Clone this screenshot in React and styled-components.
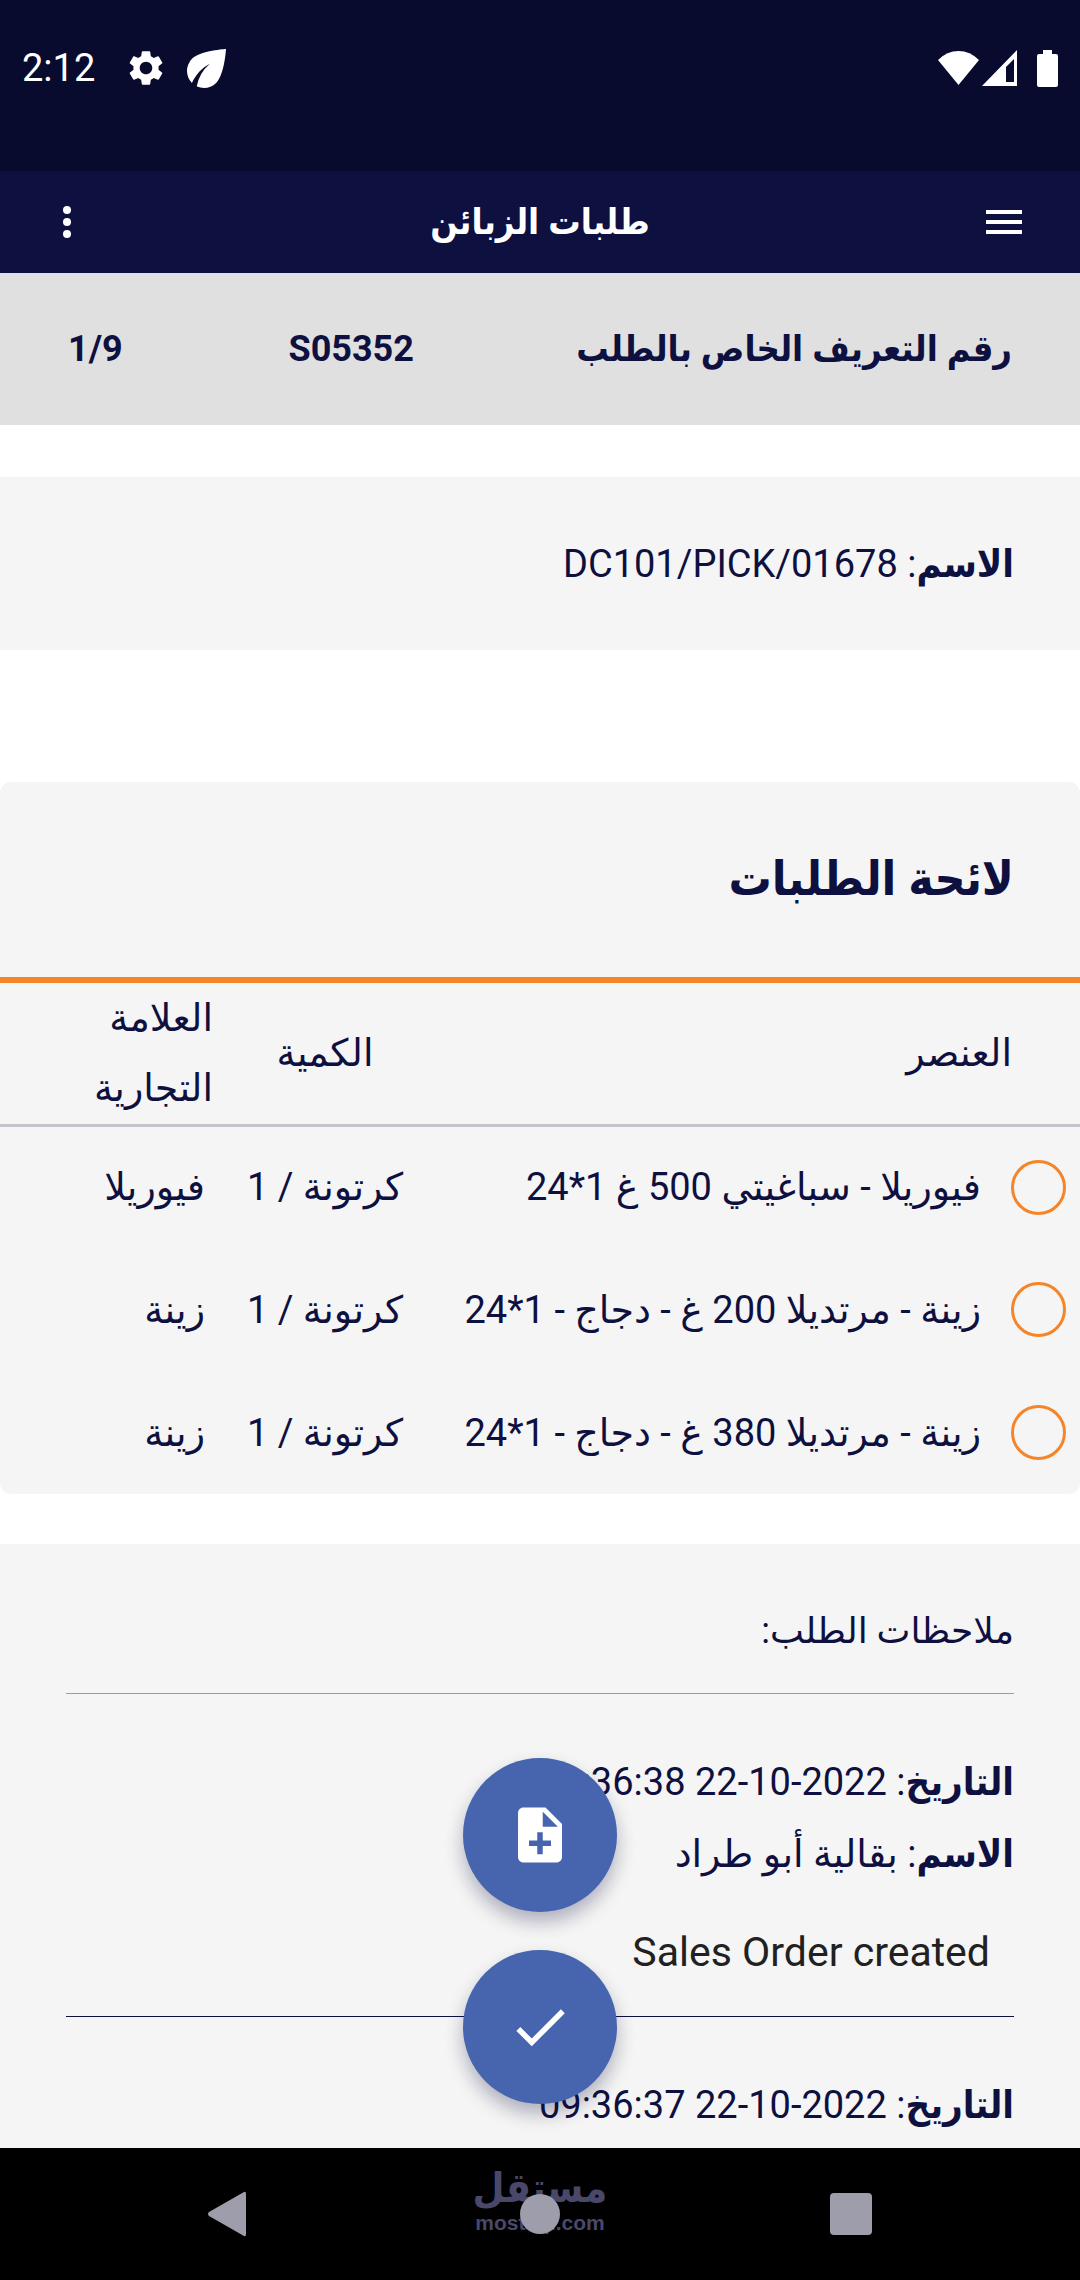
import React, { useState } from "react";
import styled, { createGlobalStyle } from "styled-components";
import { MdSettings, MdNoteAdd, MdCheck } from "react-icons/md";

const GlobalStyle = createGlobalStyle`
  * {
    box-sizing: border-box;
  }
  body {
    margin: 0;
    background: #fff;
    color: #0e1040;
    font-family: Roboto, "DejaVu Sans", sans-serif;
    font-size: 38px;
  }
  button {
    display: flex;
    align-items: center;
    justify-content: center;
    padding: 0;
    border: none;
    background: none;
    cursor: pointer;
  }
`;

const boldFont = `Roboto, "DejaVu Sans Condensed", "DejaVu Sans", sans-serif`;

const Screen = styled.div`
  display: flex;
  flex-direction: column;
  height: 100vh;
`;

const StatusBar = styled.div`
  display: flex;
  justify-content: space-between;
  height: 171px;
  padding: 44px 22px 0;
  background: #080b2e;
  color: #fff;
  direction: ltr;
`;

const StatusGroup = styled.div`
  display: flex;
  align-items: center;
  height: 48px;
  gap: ${(props) => props.$gap}px;
`;

const Time = styled.span`
  font-size: 38px;
  margin-right: 10px;
`;

const Header = styled.header`
  display: grid;
  grid-template-columns: 1fr auto 1fr;
  align-items: center;
  height: 102px;
  padding: 0 50px;
  background: #0e1040;
  color: #fff;
`;

const HeaderTitle = styled.h1`
  margin: 0;
  font-family: ${boldFont};
  font-size: 36px;
`;

const IconButton = styled.button`
  width: ${(props) => props.$width}px;
  height: 60px;
  color: #fff;
  justify-self: ${(props) => props.$side || "start"};
`;

const OrderBand = styled.section`
  display: grid;
  grid-template-columns: 23fr 10fr 7fr;
  align-items: center;
  height: 152px;
  padding: 0 68px;
  background: #e0e0e0;
  font-family: ${boldFont};
  font-size: 36px;
  font-weight: bold;
`;

const BandCell = styled.span`
  text-align: ${(props) => props.$align || "start"};
  white-space: nowrap;
`;

const Body = styled.div`
  position: relative;
  flex: 1;
  min-height: 0;
`;

const Scroll = styled.main`
  height: 100%;
  overflow-y: auto;
  scrollbar-width: none;
`;

const Card = styled.section`
  margin-top: ${(props) => props.$gap}px;
  border-radius: ${(props) => (props.$rounded ? 11 : 0)}px;
  background: #f5f5f5;
`;

const Line = styled.p`
  margin: 0;
  line-height: 72px;
`;

const Label = styled.b`
  font-family: ${boldFont};
`;

const NameCard = styled(Card)`
  padding: 51px 66px 50px;
`;

const ListTitle = styled.h2`
  margin: 0;
  padding: 61px 66px 62px;
  border-bottom: 6px solid #f68428;
  font-family: ${boldFont};
  font-size: 48px;
  line-height: 72px;
`;

const Table = styled.table`
  width: 100%;
  border-collapse: collapse;
  table-layout: fixed;
`;

const HeadRow = styled.tr`
  height: 142px;
  border-bottom: 3px solid #c2c3cb;
`;

const HeadCell = styled.th`
  padding: 0 ${(props) => props.$start || 0}px 0 ${(props) => props.$end || 0}px;
  font-weight: normal;
  line-height: 70px;
  text-align: ${(props) => props.$align || "start"};
`;

const Column = styled.col`
  width: ${(props) => props.$width || "auto"};
`;

const Row = styled.tr`
  height: 123px;
`;

const Cell = styled.td`
  padding: 0 ${(props) => props.$start || 0}px 0 0;
  text-align: ${(props) => props.$align || "start"};
  white-space: nowrap;
`;

const Check = styled.input`
  appearance: none;
  display: block;
  width: 55px;
  height: 55px;
  margin: 0;
  border: 3px solid #f68428;
  border-radius: 50%;
  cursor: pointer;
  &:checked {
    background: #f68428;
  }
`;

const Notes = styled(Card)`
  padding: 51px 66px 0;
`;

const NotesTitle = styled.h3`
  margin: 0;
  padding-bottom: 26px;
  border-bottom: 1px solid #f68428;
  font-size: 36px;
  font-weight: normal;
  line-height: 72px;
`;

const Note = styled.article`
  padding: 52px 0 28px;
  border-bottom: 1px solid #0e1040;
`;

const Message = styled.p`
  margin: 26px 24px 0;
  color: #212121;
  font-size: 41px;
  line-height: 72px;
`;

const Actions = styled.div`
  position: absolute;
  bottom: 44px;
  left: 0;
  right: 0;
  display: flex;
  flex-direction: column;
  align-items: center;
  gap: 38px;
  pointer-events: none;
`;

const Fab = styled.button`
  width: 154px;
  height: 154px;
  border-radius: 50%;
  && {
    background: #4765ae;
  }
  color: #fff;
  box-shadow: 0 10px 18px rgba(14, 16, 64, 0.3);
  pointer-events: auto;
`;

const NavBar = styled.nav`
  position: relative;
  display: grid;
  grid-template-columns: 17fr 6fr 17fr;
  align-items: center;
  justify-items: center;
  height: 132px;
  background: #000;
  direction: ltr;
`;

const NavButton = styled.button`
  position: relative;
  width: 80px;
  height: 80px;
`;

const Watermark = styled.a`
  position: absolute;
  top: 16px;
  left: 0;
  right: 0;
  display: flex;
  flex-direction: column;
  align-items: center;
  color: #49486a;
  font-weight: bold;
  text-decoration: none;
`;

const MarkName = styled.span`
  font-family: ${boldFont};
  font-size: 41px;
  line-height: 48px;
`;

const MarkSite = styled.span`
  font-family: "Liberation Sans", sans-serif;
  font-size: 21px;
  line-height: 22px;
`;

const items = [
  { id: 1, name: "فيوريلا - سباغيتي 500 غ 1*24", qty: "كرتونة / 1", brand: "فيوريلا" },
  { id: 2, name: "زينة - مرتديلا 200 غ - دجاج - 1*24", qty: "كرتونة / 1", brand: "زينة" },
  { id: 3, name: "زينة - مرتديلا 380 غ - دجاج - 1*24", qty: "كرتونة / 1", brand: "زينة" },
];

const notes = [
  { date: "2022-10-22 09:36:38", name: "بقالية أبو طراد", message: "Sales Order created" },
  { date: "2022-10-22 09:36:37" },
];

export default function App() {
  const [picked, setPicked] = useState([]);

  function toggle(id) {
    if (picked.includes(id)) {
      setPicked(picked.filter((p) => p !== id));
    } else {
      setPicked([...picked, id]);
    }
  }

  return (
    <Screen dir="rtl" lang="ar">
      <GlobalStyle />
      <StatusBar>
        <StatusGroup $gap={20}>
          <Time>2:12</Time>
          <MdSettings size={42} />
          <svg width="39" height="39" viewBox="4 4 16 16" fill="#fff">
            <path d="M6.05 8.05a7 7 0 0 0-.02 9.88c1.47-3.4 4.09-6.24 7.36-7.93A15.95 15.95 0 0 0 8 19.32c2.6 1.23 5.8.78 7.95-1.37C19.43 14.47 20 4 20 4S9.53 4.57 6.05 8.05z" />
          </svg>
        </StatusGroup>
        <StatusGroup $gap={3}>
          <svg width="41" height="36" viewBox="0 0 41 36" fill="#fff">
            <path d="M0 10Q9 1 20.500 1T41 10L20.500 35z" />
          </svg>
          <svg width="35" height="36" viewBox="0 0 35 36" fill="#fff">
            <path fillRule="evenodd" d="M35 0V36H0zM32 9L24 17V32H32z" />
          </svg>
          <svg width="38" height="37" viewBox="0 0 38 37" fill="#fff">
            <path d="M23 0h9v4h4q2 0 2 2v29q0 2-2 2H19q-2 0-2-2V6q0-2 2-2h4z" />
          </svg>
        </StatusGroup>
      </StatusBar>

      <Header>
        <IconButton $width={52} aria-label="القائمة">
          <svg width="36" height="24" viewBox="0 0 36 24" fill="currentColor">
            <path d="M0 0h36v4H0zM0 10h36v4H0zM0 20h36v4H0z" />
          </svg>
        </IconButton>
        <HeaderTitle>طلبات الزبائن</HeaderTitle>
        <IconButton $width={34} $side="end" aria-label="المزيد">
          <svg width="8" height="32" viewBox="0 0 8 32" fill="currentColor">
            <circle cx="4" cy="4" r="4" />
            <circle cx="4" cy="16" r="4" />
            <circle cx="4" cy="28" r="4" />
          </svg>
        </IconButton>
      </Header>

      <OrderBand>
        <BandCell>رقم التعريف الخاص بالطلب</BandCell>
        <BandCell $align="center">S05352</BandCell>
        <BandCell $align="end">1/9</BandCell>
      </OrderBand>

      <Body>
        <Scroll>
          <NameCard $gap={52}>
            <Line>
              <Label>الاسم</Label>: DC101/PICK/01678
            </Line>
          </NameCard>

          <Card $gap={132} $rounded>
            <ListTitle>لائحة الطلبات</ListTitle>
            <Table>
              <colgroup>
                <Column $width="99px" />
                <Column />
                <Column $width="200px" />
                <Column $width="225px" />
              </colgroup>
              <thead>
                <HeadRow>
                  <HeadCell colSpan={2} $start={68}>
                    العنصر
                  </HeadCell>
                  <HeadCell $align="center">الكمية</HeadCell>
                  <HeadCell $start={12} $end={50}>
                    العلامة التجارية
                  </HeadCell>
                </HeadRow>
              </thead>
              <tbody>
                {items.map((item) => (
                  <Row key={item.id}>
                    <Cell $start={14}>
                      <Check
                        type="checkbox"
                        aria-label={item.name}
                        checked={picked.includes(item.id)}
                        onChange={() => toggle(item.id)}
                      />
                    </Cell>
                    <Cell>{item.name}</Cell>
                    <Cell $align="center">{item.qty}</Cell>
                    <Cell $start={20}>{item.brand}</Cell>
                  </Row>
                ))}
              </tbody>
            </Table>
          </Card>

          <Notes $gap={50}>
            <NotesTitle>ملاحظات الطلب:</NotesTitle>
            {notes.map((note) => (
              <Note key={note.date}>
                <Line>
                  <Label>التاريخ</Label>: {note.date}
                </Line>
                {note.name && (
                  <Line>
                    <Label>الاسم</Label>: {note.name}
                  </Line>
                )}
                {note.message && <Message>{note.message}</Message>}
              </Note>
            ))}
          </Notes>
        </Scroll>

        <Actions>
          <Fab aria-label="إضافة ملاحظة">
            <MdNoteAdd size={66} />
          </Fab>
          <Fab aria-label="تأكيد">
            <MdCheck size={66} />
          </Fab>
        </Actions>
      </Body>

      <NavBar>
        <Watermark href="#mostaql">
          <MarkName>مستقل</MarkName>
          <MarkSite>mostaql.com</MarkSite>
        </Watermark>
        <NavButton aria-label="رجوع">
          <svg width="46" height="46" viewBox="0 0 46 46" fill="#9d9dab">
            <path d="M37 1q2-1 2 2v40q0 3-2 2L2 25q-2-2 0-4z" />
          </svg>
        </NavButton>
        <NavButton aria-label="الرئيسية">
          <svg width="40" height="40" viewBox="0 0 40 40" fill="#9d9dab">
            <circle cx="20" cy="20" r="20" />
          </svg>
        </NavButton>
        <NavButton aria-label="التطبيقات">
          <svg width="42" height="42" viewBox="0 0 42 42" fill="#9d9dab">
            <rect width="42" height="42" rx="4" />
          </svg>
        </NavButton>
      </NavBar>
    </Screen>
  );
}
